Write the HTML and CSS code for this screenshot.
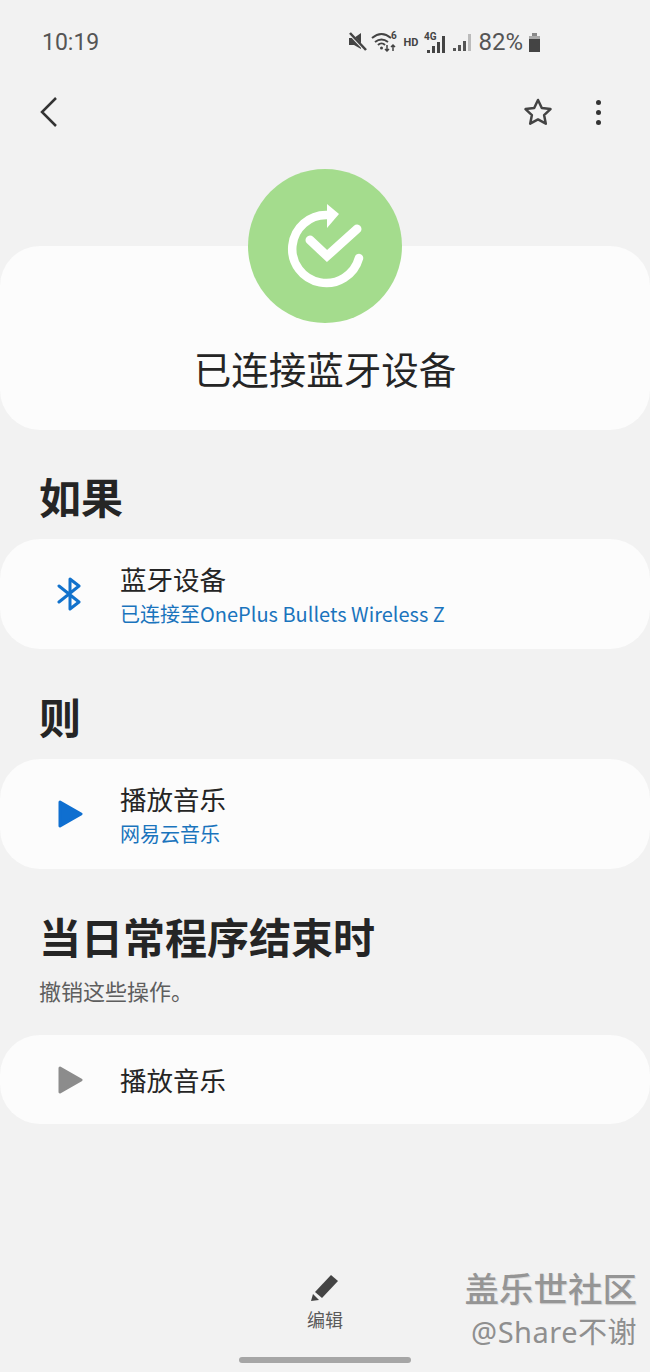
FILE: index.html
```html
<!DOCTYPE html>
<html lang="zh-CN">
<head>
  <meta charset="UTF-8">
  <title>已连接蓝牙设备</title>
  <meta name="viewport" content="width=device-width, initial-scale=1.0">
  <link rel="stylesheet" href="styles.css">
</head>
<body>
  <div class="status">
    <span class="time">10:19</span>
    <div class="status-right">
      <svg class="mute" width="20" height="20" viewBox="0 0 18 20"><path d="M0 6h5l7-5v16L5 13H0z" fill="#444"/><path d="M1 2l16 17" stroke="#f2f2f2" stroke-width="3"/><path d="M1 1l16 17" stroke="#444" stroke-width="2.500"/></svg>
      <svg width="27" height="22" viewBox="0 0 27 22" fill="none" stroke="#444" stroke-width="2"><path d="M1 7c6-5 13-5 19 0M4 11c4-3 9-3 13 0M7 14c2-2 5-2 7 0"/><circle cx="10.500" cy="17" r="1.500" fill="#444" stroke="none"/><path d="M16 14v6M14 18l2 2 2-2M22 20v-6M20 16l2-2 2 2" stroke-width="1.500"/><text x="20" y="8" class="mini" stroke="none" fill="#444">6</text></svg>
      <span class="hd">HD</span>
      <svg width="23" height="23" viewBox="0 0 23 23"><text x="0" y="9" class="mini" fill="#444">4G</text><path d="M3 19h3v3H3zM8 15h3v7H8zM13 11h3v11h-3zM18 5h3v17h-3z" fill="#444"/></svg>
      <svg width="19" height="20" viewBox="0 0 19 20"><path d="M0 16h3v3H0zM5 13h3v6H5zM10 9h3v10h-3z" fill="#555"/><path d="M15 2h3v17h-3z" fill="#bbb"/></svg>
      <span class="battery-text">82%</span>
      <svg width="13" height="21" viewBox="0 0 13 21"><path d="M4 1h5v3H4z" fill="#888"/><path d="M1 4h11v3H1z" fill="#aaa"/><path d="M1 7h11v13H1z" fill="#444"/></svg>
    </div>
  </div>

  <div class="toolbar">
    <svg class="back" width="20" height="32" viewBox="0 0 20 32" fill="none" stroke="#333" stroke-width="2.500"><path d="M17 2L3 16l14 14"/></svg>
    <svg class="star" width="30" height="28" viewBox="0 0 30 28" fill="none" stroke="#444" stroke-width="2.500" stroke-linejoin="round"><path d="M15 2l3.800 8 8.700 1.100-6.400 6 1.700 8.600-7.800-4.300-7.800 4.300 1.700-8.600-6.400-6L11.200 10z"/></svg>
    <div class="more"><i></i><i></i><i></i></div>
  </div>

  <div class="hero-icon">
    <svg width="154" height="154" viewBox="0 0 154 154" fill="none" stroke="#fff" stroke-linecap="round">
      <path d="M79 46A34 34 0 1 0 111 89" stroke-width="8.500"/>
      <path d="M62 71L79 87L109 60" stroke-width="9"/>
      <path d="M79 35L91 45L79 59z" fill="#fff" stroke="none"/>
    </svg>
  </div>
  <section class="card hero">
    <h1>已连接蓝牙设备</h1>
  </section>

  <h2 class="heading">如果</h2>
  <section class="card row">
    <svg class="row-icon" width="26" height="34" viewBox="0 0 26 34" fill="none" stroke="#1272cc" stroke-width="3" stroke-linejoin="round" stroke-linecap="round"><path d="M2 9l20 16-9 7V2l9 7L2 25"/></svg>
    <div>
      <div class="row-title">蓝牙设备</div>
      <div class="row-sub">已连接至OnePlus Bullets Wireless Z</div>
    </div>
  </section>

  <h2 class="heading then">则</h2>
  <section class="card row">
    <svg class="row-icon" width="26" height="30" viewBox="0 0 26 30"><path d="M3 3l21 12L3 27z" fill="#0f6fd0" stroke="#0f6fd0" stroke-width="3" stroke-linejoin="round"/></svg>
    <div>
      <div class="row-title">播放音乐</div>
      <div class="row-sub">网易云音乐</div>
    </div>
  </section>

  <h2 class="heading end">当日常程序结束时</h2>
  <p class="note">撤销这些操作。</p>
  <section class="card row short">
    <svg class="row-icon" width="26" height="30" viewBox="0 0 26 30"><path d="M3 3l21 12L3 27z" fill="#8c8c8c" stroke="#8c8c8c" stroke-width="3" stroke-linejoin="round"/></svg>
    <div class="row-title">播放音乐</div>
  </section>

  <div class="bottom">
    <svg width="30" height="28" viewBox="0 0 30 28"><path d="M21 1l7 6-16 17-7-6z" fill="#444"/><path d="M3 20l6 6-8 1z" fill="#444"/></svg>
    <span>编辑</span>
    <div class="home-bar"></div>
  </div>

  <div class="watermark">
    <div class="wm-top">盖乐世社区</div>
    <div class="wm-sub">@Share不谢</div>
  </div>
</body>
</html>
```

FILE: styles.css
```css
* {
  box-sizing: border-box;
}

body {
  margin: 0;
  width: 650px;
  height: 1372px;
  position: relative;
  overflow: hidden;
  display: flex;
  flex-direction: column;
  background-color: #f2f2f2;
  color: #252525;
  font-family: "Noto Sans CJK SC", "Noto Sans", sans-serif;
}

/* Status bar */
.status {
  height: 84px;
  padding: 0 109px 0 42px;
  display: flex;
  align-items: center;
  justify-content: space-between;
  color: #555;
  font-family: Roboto, sans-serif;
  font-size: 23px;
  flex: none;
}

.status-right {
  display: flex;
  align-items: center;
  gap: 6px;
}

.status-right svg {
  display: block;
  overflow: visible;
}

.status-right .mute {
  margin-right: -3px;
}

.battery-text {
  font-size: 24px;
  margin-right: -1px;
}

.mini {
  font-family: Roboto, sans-serif;
  font-size: 10px;
  font-weight: 700;
}

.hd {
  font-size: 11px;
  font-weight: 700;
  color: #444;
}

/* Toolbar */
.toolbar {
  height: 56px;
  padding: 0 49px 0 39px;
  display: flex;
  align-items: center;
  flex: none;
}

.star {
  margin-left: auto;
  margin-right: 43px;
}

.more {
  display: flex;
  flex-direction: column;
  gap: 5px;
}

.more i {
  width: 5px;
  height: 5px;
  border-radius: 50%;
  background: #333;
}

/* Hero */
.hero-icon {
  width: 154px;
  height: 154px;
  margin: 29px auto -77px;
  border-radius: 50%;
  background: #a4dc8d;
  position: relative;
  z-index: 1;
  flex: none;
}

.hero-icon svg {
  display: block;
}

.card {
  background: #fcfcfc;
  border-radius: 40px;
  flex: none;
}

.hero {
  height: 184px;
  padding-top: 94px;
}

h1 {
  margin: 0;
  text-align: center;
  font-size: 37.500px;
  font-weight: 400;
  line-height: 56px;
}

/* Sections */
.heading {
  margin: 36px 0 14px 39px;
  font-size: 42px;
  font-weight: 700;
  line-height: 59px;
  flex: none;
}

.heading.then {
  margin-top: 37px;
  margin-bottom: 14px;
}

.heading.end {
  margin-top: 37px;
  margin-bottom: 0;
}

.note {
  margin: 9px 0 28px 39px;
  color: #5e5e5e;
  font-size: 22px;
  line-height: 33px;
}

.row {
  height: 110px;
  padding-left: 57px;
  display: flex;
  align-items: center;
}

.row.short {
  height: 89px;
}

.row-icon {
  width: 26px;
  flex: none;
  margin-right: 37px;
}

.row-title {
  font-size: 26.500px;
  line-height: 38px;
}

.row-sub {
  color: #1a74bd;
  font-size: 20px;
  line-height: 29px;
  margin-top: 1px;
}

/* Bottom */
.bottom {
  margin-top: auto;
  display: flex;
  flex-direction: column;
  align-items: center;
  color: #5a5a5a;
  font-size: 18px;
  line-height: 26px;
  padding-bottom: 9px;
}

.bottom span {
  margin-top: 4px;
}

.home-bar {
  width: 172px;
  height: 6px;
  margin-top: 25px;
  border-radius: 3px;
  background: #a6a6a6;
}

/* Watermark sits over the page */
.watermark {
  position: absolute;
  right: 13px;
  top: 1265px;
  text-align: right;
  color: #8f8f8f;
}

.wm-top {
  font-size: 34.500px;
  font-weight: 500;
  line-height: 44px;
  color: #959595;
  text-shadow: 1px 1px 0 #dcdcdc;
}

.wm-sub {
  margin-top: 3px;
  font-family: "Noto Sans", "Noto Sans CJK SC", sans-serif;
  font-size: 29px;
  line-height: 40px;
  letter-spacing: 0.500px;
}
```
